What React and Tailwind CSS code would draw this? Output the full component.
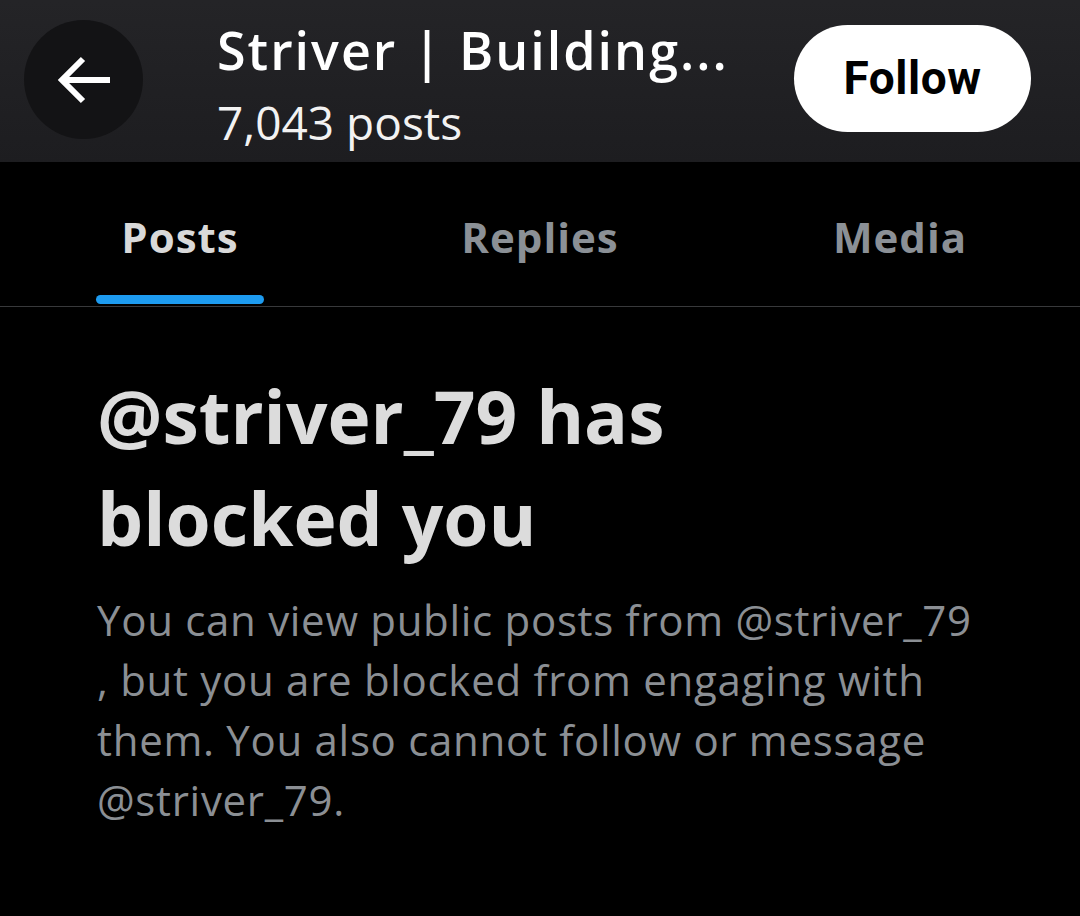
export default function App() {
  return (
    <div className="h-[916px] w-[1080px] overflow-hidden bg-black font-['Open_Sans','Roboto',sans-serif]">
      {/* Header */}
      <header className="flex h-[162px] items-start bg-gradient-to-b from-[#242427] to-[#1d1d20] pl-[24px] pr-[49px]">
        <button className="mt-[20px] flex h-[119px] w-[119px] shrink-0 items-center justify-center rounded-full bg-[#131315]">
          <BackArrow />
        </button>
        <div className="ml-[74px] flex min-w-0 flex-1 flex-col pt-[18px]">
          <h1 className="text-[52px] font-semibold leading-[64px] tracking-[2px] text-white">Striver | Building...</h1>
          <p className="mt-[12px] text-[46px] leading-[56px] text-[#f2f2f2]">7,043 posts</p>
        </div>
        <button className="mt-[25px] h-[107px] w-[237px] shrink-0 rounded-full bg-white font-['Roboto',sans-serif] text-[46px] font-bold tracking-[0.5px] text-black">
          Follow
        </button>
      </header>

      {/* Tabs */}
      <nav className="grid h-[145px] grid-cols-3 border-b border-[#38393b]">
        <Tab label="Posts" active />
        <Tab label="Replies" />
        <Tab label="Media" />
      </nav>

      {/* Blocked notice */}
      <section className="pl-[97px] pr-[20px] pt-[58px]">
        <h2 className="text-[73px] font-bold leading-[102px] text-[#dcdcdc]">
          @striver_79 has
          <br />
          blocked you
        </h2>
        <p className="mt-[21px] text-[42px] leading-[60px] tracking-[0.7px] text-[#8b8f94]">
          You can view public posts from @striver_79
          <br />
          , but you are blocked from engaging with
          <br />
          them. You also cannot follow or message
          <br />
          @striver_79.
        </p>
      </section>
    </div>
  );
}

function BackArrow() {
  return (
    <svg width="56" height="48" viewBox="0 0 56 48" fill="none" stroke="white" strokeWidth="6">
      <path d="M54 24H6" />
      <path d="M27 3 6 24l21 21" />
    </svg>
  );
}

function Tab({ label, active }) {
  return (
    <div className="relative flex items-center justify-center pt-[5px]">
      <span className={`text-[42px] font-bold tracking-[1px] ${active ? "text-[#d9d9d9]" : "text-[#8b9096]"}`}>{label}</span>
      {active && <span className="absolute bottom-[2px] left-[96px] h-[9px] w-[168px] rounded-full bg-[#1d9bf0]" />}
    </div>
  );
}
